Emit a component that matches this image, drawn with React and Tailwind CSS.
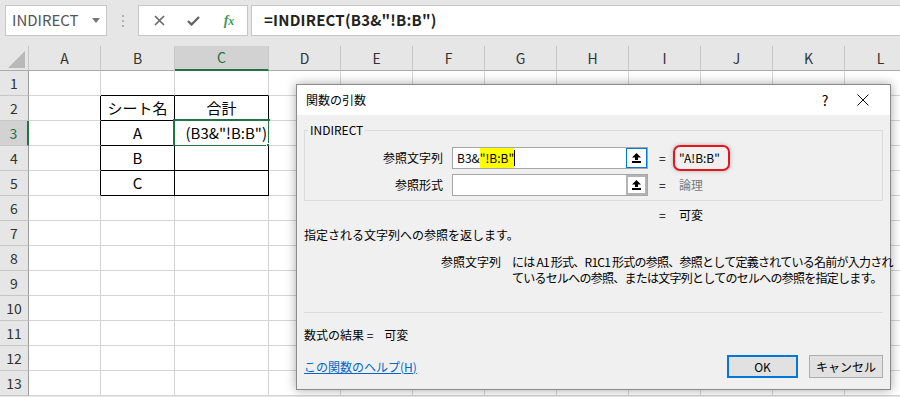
import React from "react";

const COLS = ["A", "B", "C", "D", "E", "F", "G", "H", "I", "J", "K", "L"];
const ROWS = [1, 2, 3, 4, 5, 6, 7, 8, 9, 10, 11, 12, 13];

const CELLS = {
  "2-1": "シート名",
  "2-2": "合計",
  "3-1": "A",
  "4-1": "B",
  "5-1": "C",
};

// B2:C5 has black borders
const inTable = (r, c) => r >= 2 && r <= 5 && c >= 1 && c <= 2;

const UploadIcon = () => (
  <svg width="9" height="10" viewBox="0 0 9 10">
    <path d="M4.5 0 L9 4.5 H6 V7 H3 V4.5 H0 Z" fill="#000" />
    <rect x="0" y="8" width="9" height="2" fill="#000" />
  </svg>
);

const RefInput = ({ focused, children }) => (
  <div className="flex h-[22px] w-[196px] border border-[#a6a6a6] bg-white">
    <div className="flex h-full flex-1 items-center overflow-hidden pl-[4px] text-[12px] leading-none">
      {children}
    </div>
    {focused ? (
      <div className="flex h-full w-[21px] items-center justify-center border border-[#0078d7] bg-white">
        <UploadIcon />
      </div>
    ) : (
      <div className="flex h-full w-[21px] items-center justify-center border-2 border-[#b4b4b4] bg-white">
        <UploadIcon />
      </div>
    )}
  </div>
);

const Cell = ({ r, c }) => {
  const rightBlack = inTable(r, c) || inTable(r, c + 1);
  const bottomBlack = inTable(r, c) || inTable(r + 1, c);
  const text = CELLS[`${r}-${c}`];
  const isActive = r === 3 && c === 2;
  return (
    <div
      className={`relative flex h-[25px] items-center justify-center border-r border-b bg-white text-[15px] text-black ${
        rightBlack ? "border-r-black" : "border-r-[#d4d4d4]"
      } ${bottomBlack ? "border-b-black" : "border-b-[#d4d4d4]"}`}
    >
      {text}
      {isActive && (
        <>
          <div className="flex h-full w-full items-center justify-end overflow-hidden whitespace-nowrap pr-[1px]">
            (B3&amp;"!B:B")
          </div>
          <div className="absolute -left-[2px] -top-[2px] h-[28px] w-[97px] border-2 border-[#217346]" />
          <div className="absolute left-[92px] top-[23px] h-[5px] w-[5px] bg-[#217346] outline outline-1 outline-white" />
        </>
      )}
    </div>
  );
};

export default function App() {
  return (
    <div className="relative h-[397px] w-[900px] overflow-hidden bg-[#e6e6e6] font-['Noto_Sans_CJK_JP',sans-serif]">
      {/* Formula bar */}
      <div className="flex h-[46px] items-start pl-[5px] pt-[5px]">
        <div className="flex h-[31px] w-[102px] items-center border border-[#c6c6c6] bg-white pl-[6px] pr-[6px]">
          <span className="flex-1 text-[15px] text-[#555]">INDIRECT</span>
          <svg width="8" height="5" viewBox="0 0 8 5">
            <path d="M0 0 H8 L4 5 Z" fill="#777" />
          </svg>
        </div>
        <div className="flex h-[31px] w-[31px] flex-col items-center justify-center gap-[3px]">
          <span className="h-[2px] w-[2px] bg-[#b0b0b0]" />
          <span className="h-[2px] w-[2px] bg-[#b0b0b0]" />
          <span className="h-[2px] w-[2px] bg-[#b0b0b0]" />
        </div>
        <div className="flex h-[31px] w-[110px] items-center border border-[#c6c6c6] bg-white">
          <div className="flex w-[36px] justify-center pl-[4px]">
            <svg width="11" height="11" viewBox="0 0 11 11">
              <path d="M1 1 L10 10 M10 1 L1 10" stroke="#666" strokeWidth="1.6" />
            </svg>
          </div>
          <div className="flex w-[36px] justify-center">
            <svg width="13" height="10" viewBox="0 0 13 10">
              <path d="M1 5 L4.5 8.5 L12 1" stroke="#666" strokeWidth="2.4" fill="none" />
            </svg>
          </div>
          <div className="flex w-[36px] justify-center">
            <span className="font-['Liberation_Serif',serif] text-[14px] font-bold italic text-[#3d9a5e]">
              f<span className="text-[12px]">x</span>
            </span>
          </div>
        </div>
        <div className="ml-[3px] flex h-[31px] flex-1 items-center border border-r-0 border-[#c6c6c6] bg-white pl-[12px]">
          <span className="text-[15px] font-bold tracking-[0.2px] text-[#222]">=INDIRECT(B3&amp;"!B:B")</span>
        </div>
      </div>

      {/* Sheet grid */}
      <div className="grid grid-cols-[29px_72px_74px_94px_72px_72px_72px_72px_72px_72px_72px_72px_72px]">
        <div className="relative h-[25px] border-r border-b border-r-[#c6c6c6] border-b-[#ababab]">
          <svg className="absolute left-[8px] top-[5px]" width="17" height="17" viewBox="0 0 17 17">
            <path d="M17 0 V17 H0 Z" fill="#b9b9b9" />
          </svg>
        </div>
        {COLS.map((col) =>
          col === "C" ? (
            <div
              key={col}
              className="flex h-[25px] items-center justify-center border-r border-b-2 border-r-[#c6c6c6] border-b-[#217346] bg-[#d2d2d2] text-[14px] text-[#217346]"
            >
              {col}
            </div>
          ) : (
            <div
              key={col}
              className="flex h-[25px] items-center justify-center border-r border-b border-r-[#c6c6c6] border-b-[#ababab] text-[14px] text-[#333]"
            >
              {col}
            </div>
          )
        )}
        {ROWS.map((r) => (
          <React.Fragment key={r}>
            {r === 3 ? (
              <div className="flex h-[25px] items-center justify-center border-r-2 border-b border-r-[#217346] border-b-[#c6c6c6] bg-[#d2d2d2] text-[14px] text-[#217346]">
                {r}
              </div>
            ) : (
              <div className="flex h-[25px] items-center justify-center border-r border-b border-r-[#9b9b9b] border-b-[#c6c6c6] text-[14px] text-[#333]">
                {r}
              </div>
            )}
            {COLS.map((col, c) => (
              <Cell key={col} r={r} c={c} />
            ))}
          </React.Fragment>
        ))}
      </div>

      {/* Function arguments dialog */}
      <div className="absolute left-[296px] top-[84px] flex h-[306px] w-[595px] flex-col border border-[#8a8a8a] bg-[#f0f0f0] text-[12px] leading-[16px] text-black shadow-[0_0_10px_rgba(0,0,0,0.35)]">
        <div className="flex h-[30px] items-center bg-white pl-[9px]">
          <span className="flex-1">関数の引数</span>
          <span className="w-[20px] text-center text-[14px]">?</span>
          <div className="flex w-[55px] justify-center">
            <svg width="12" height="12" viewBox="0 0 12 12">
              <path d="M0.5 0.5 L11.5 11.5 M11.5 0.5 L0.5 11.5" stroke="#111" strokeWidth="1" />
            </svg>
          </div>
        </div>

        <div className="flex flex-col px-[7px]">
          <fieldset className="mt-[7px] border border-[#dcdcdc] pb-[4px]">
            <legend className="ml-[3px] px-[2px]">INDIRECT</legend>
            <div className="mt-[9px] flex items-center">
              <span className="w-[138px] shrink-0 text-right">参照文字列</span>
              <div className="ml-[9px]">
                <RefInput focused>
                  B3&amp;
                  <span className="flex h-[22px] items-center bg-[#ffff00]">"!B:B"</span>
                  <span className="h-[16px] w-[1px] bg-black" />
                </RefInput>
              </div>
              <span className="ml-[11px] w-[8px]">=</span>
              <div className="relative ml-[12px]">
                <span>"A!B:B"</span>
                <div className="absolute -left-[6px] -top-[5px] h-[26px] w-[57px] rounded-[7px] border-2 border-[#e8141b] shadow-[0_0_4px_rgba(0,0,0,0.25)]" />
              </div>
            </div>
            <div className="mt-[5px] flex items-center">
              <span className="w-[138px] shrink-0 text-right">参照形式</span>
              <div className="ml-[9px]">
                <RefInput />
              </div>
              <span className="ml-[11px] w-[8px]">=</span>
              <span className="ml-[12px] text-[#7a7a7a]">論理</span>
            </div>
          </fieldset>

          <div className="mt-[6px] flex">
            <span className="ml-[355px] w-[8px]">=</span>
            <span className="ml-[12px]">可変</span>
          </div>

          <div className="mt-[4px]">指定される文字列への参照を返します。</div>

          <div className="mt-[11px] flex">
            <span className="w-[197px] shrink-0 text-right">参照文字列</span>
            <p className="ml-[11px] whitespace-nowrap tracking-[-0.75px]">
              には A1 形式、R1C1 形式の参照、参照として定義されている名前が入力され
              <br />
              ているセルへの参照、または文字列としてのセルへの参照を指定します。
            </p>
          </div>

          <div className="mt-[26px] h-px bg-[#dcdcdc]" />

          <div className="mt-[14px] flex">
            <span>数式の結果 =</span>
            <span className="ml-[11px]">可変</span>
          </div>

          <div className="mt-[12px] flex items-center">
            <a className="flex-1 text-[#0066cc] underline">この関数のヘルプ(H)</a>
            <button className="h-[23px] w-[71px] border-2 border-[#0078d7] bg-[#e1e1e1]">OK</button>
            <button className="ml-[11px] h-[23px] w-[74px] border border-[#adadad] bg-[#e1e1e1]">
              キャンセル
            </button>
          </div>
        </div>
      </div>
    </div>
  );
}
